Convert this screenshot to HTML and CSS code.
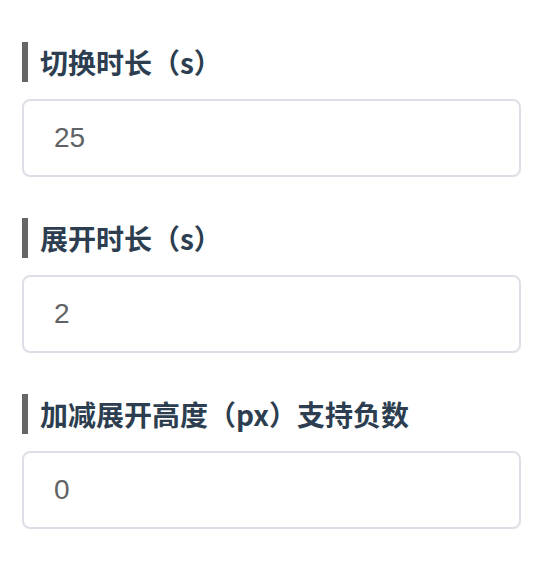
FILE: index.html
```html
<!DOCTYPE html>
<html lang="zh">
<head>
<meta charset="utf-8">
<link rel="stylesheet" href="styles.css">
</head>
<body>
<div class="form">
  <div class="field">
    <div class="label">切换时长（s）</div>
    <input class="input" type="text" value="25">
  </div>
  <div class="field">
    <div class="label">展开时长（s）</div>
    <input class="input" type="text" value="2">
  </div>
  <div class="field">
    <div class="label">加减展开高度（px）支持负数</div>
    <input class="input" type="text" value="0">
  </div>
</div>
</body>
</html>
```
FILE: styles.css
```css
html, body {
  margin: 0;
  padding: 0;
  background: #ffffff;
}
.form {
  display: flex;
  flex-direction: column;
  gap: 41px;
  padding: 42px 21px 0 22px;
}
.field {
  display: flex;
  flex-direction: column;
  gap: 17px;
}
.label {
  border-left: 6px solid #666666;
  padding-left: 12px;
  height: 40px;
  line-height: 40px;
  font-family: "Noto Sans CJK SC", "Noto Sans", sans-serif;
  font-weight: 700;
  font-size: 28px;
  color: #2c3e50;
}
.input {
  box-sizing: border-box;
  display: block;
  width: 100%;
  height: 78px;
  margin: 0;
  padding: 0 30px;
  border: 2px solid #dcdfe6;
  border-radius: 8px;
  background: #ffffff;
  font-family: "Liberation Sans", Arial, sans-serif;
  font-size: 28px;
  color: #606266;
  outline: none;
}
```
